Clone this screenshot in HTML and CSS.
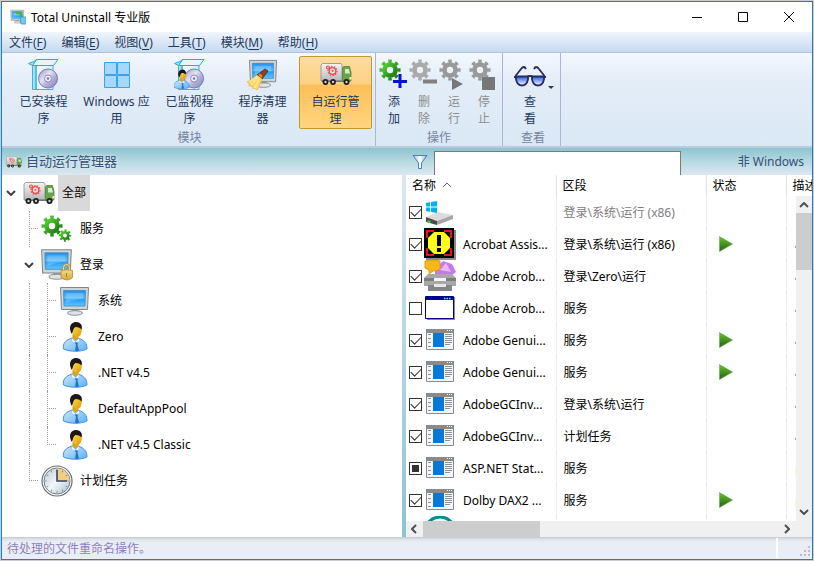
FILE: index.html
```html
<!DOCTYPE html>
<html lang="zh-CN">
<head>
<meta charset="utf-8">
<title>Total Uninstall 专业版</title>
<link rel="stylesheet" href="styles.css">
</head>
<body>
<svg class="sprite" aria-hidden="true">
  <defs>
    <linearGradient id="g-green" x1="0" y1="0" x2="1" y2="1"><stop offset="0" stop-color="#55cf33"/><stop offset="1" stop-color="#1c7a12"/></linearGradient>
    <linearGradient id="g-play" x1="0" y1="0" x2="0" y2="1"><stop offset="0" stop-color="#62c92c"/><stop offset="1" stop-color="#2a5f1c"/></linearGradient>
    <linearGradient id="g-screen" x1="0" y1="0" x2="0" y2="1"><stop offset="0" stop-color="#1c90f0"/><stop offset=".5" stop-color="#63c0ff"/><stop offset=".55" stop-color="#1e9cff"/><stop offset="1" stop-color="#62c4ff"/></linearGradient>
    <linearGradient id="g-metal" x1="0" y1="0" x2="0" y2="1"><stop offset="0" stop-color="#f4f4f4"/><stop offset="1" stop-color="#b4b8bb"/></linearGradient>
    <linearGradient id="g-shirt" x1="0" y1="0" x2="1" y2="1"><stop offset="0" stop-color="#cfe8ff"/><stop offset="1" stop-color="#5eaef5"/></linearGradient>
    <linearGradient id="g-face" x1="0" y1="0" x2="1" y2="1"><stop offset="0" stop-color="#ffe24a"/><stop offset="1" stop-color="#d89a10"/></linearGradient>
    <linearGradient id="g-gold" x1="0" y1="0" x2="0" y2="1"><stop offset="0" stop-color="#f8dc86"/><stop offset="1" stop-color="#d3a53a"/></linearGradient>
    <linearGradient id="g-disc" x1="0" y1="0" x2="1" y2="1"><stop offset="0" stop-color="#8f92c4"/><stop offset=".4" stop-color="#e6e2f6"/><stop offset=".6" stop-color="#b5b2dc"/><stop offset="1" stop-color="#8082b8"/></linearGradient>
    <linearGradient id="g-box" x1="0" y1="0" x2="1" y2="0"><stop offset="0" stop-color="#b8ecfb"/><stop offset=".2" stop-color="#6fd2f4"/><stop offset=".24" stop-color="#f2fbff"/><stop offset="1" stop-color="#d3effb"/></linearGradient>
    <linearGradient id="g-lens" x1="0" y1="0" x2="0" y2="1"><stop offset="0" stop-color="#1d5cf0"/><stop offset="1" stop-color="#fff"/></linearGradient>
    <linearGradient id="g-clock" x1="0" y1="0" x2="1" y2="1"><stop offset="0" stop-color="#b9cad6"/><stop offset=".5" stop-color="#f2f7fa"/><stop offset="1" stop-color="#a9bfcd"/></linearGradient>
    <linearGradient id="g-funnel" x1="0" y1="0" x2="1" y2="0"><stop offset="0" stop-color="#8fc0e6"/><stop offset=".5" stop-color="#fff"/><stop offset="1" stop-color="#7fb2dc"/></linearGradient>
  </defs>
  <symbol id="gear" viewBox="0 0 24 24">
    <circle cx="12" cy="12" r="6" fill="none" stroke-width="5"/>
    <circle cx="12" cy="12" r="9.5" fill="none" stroke-width="4" pathLength="16" stroke-dasharray="1 1" stroke-dashoffset=".5"/>
  </symbol>
  <symbol id="truck" viewBox="0 0 32 32">
    <path d="M1 7 2.500 5.500H21l1 1.500v16H1z" fill="url(#g-metal)" stroke="#8a8a8a" stroke-width=".8"/>
    <path d="M22.500 9.500 24 8.500h5.500l1.500 6V23h-8.500z" fill="#6ba34c" stroke="#4b8531" stroke-width=".8"/>
    <path d="M25 11h3.800l1.200 4.500h-5z" fill="#d5ecc9"/>
    <path d="M2 22.500h28V24H2z" fill="#777"/>
    <path d="M29.500 19h2v2.500h-2z" fill="#f6efc0"/>
    <g fill="#1d1d1d"><circle cx="5.500" cy="24" r="2.900"/><circle cx="13" cy="24" r="2.900"/><circle cx="26.500" cy="24" r="3"/></g>
    <g fill="#ccc"><circle cx="5.500" cy="24" r="1.200"/><circle cx="13" cy="24" r="1.200"/><circle cx="26.500" cy="24" r="1.200"/></g>
    <circle cx="12.500" cy="13" r="3.300" fill="#fbdcdc" stroke="#ee4a4a" stroke-width="1.300"/>
    <circle cx="12.500" cy="13" r="4.500" fill="none" stroke="#ee4a4a" stroke-width="1.200" pathLength="20" stroke-dasharray="1 1"/>
    <circle cx="12.500" cy="13" r="1" fill="#e55"/>
    <circle cx="8" cy="9.500" r="1.500" fill="none" stroke="#ee4a4a" stroke-width="1.200"/>
  </symbol>
  <symbol id="monitor" viewBox="0 0 32 32">
    <path d="M13 24h6l1 3h-8z" fill="#9ea5aa"/>
    <ellipse cx="16" cy="28" rx="7.500" ry="2.300" fill="#dfe3e5" stroke="#8d9498"/>
    <path d="M1.500 2.500h28l-1 22H2.500z" fill="#cfd4d7" stroke="#7f878c" stroke-linejoin="round"/>
    <path d="M4.500 5.500h22l-.500 15.500H5z" fill="url(#g-screen)" stroke="#4a86b8" stroke-width=".8"/>
    <path d="M7 8h17v6c-6 0-10 1-17 4z" fill="#fff" opacity=".2"/>
  </symbol>
  <symbol id="login" viewBox="0 0 32 32">
    <use href="#monitor" x="-1" y="-2" width="34" height="34"/>
    <path d="M22.500 22v-3.500a3 3 0 0 1 6 0V22" fill="none" stroke="#b99337" stroke-width="2.500"/>
    <path d="M22.500 22v-3.500a3 3 0 0 1 6 0V22" fill="none" stroke="#f2dc9a"/>
    <path d="M20 21.500q5.500-1.500 11.500 0v7q-5.500 5-11.500 0z" fill="url(#g-gold)" stroke="#b58b2c" stroke-width=".8"/>
    <path d="M25.500 24v4" stroke="#a98432" stroke-width="1"/>
  </symbol>
  <symbol id="person" viewBox="0 0 32 32">
    <path d="M4.500 28c-1-6 2.500-9 8.500-11h6c6 2 9 5 9 11-6 3-17 3-23.500 0z" fill="url(#g-shirt)" stroke="#3f93e0"/>
    <path d="M13.500 13h6v4l-3 3-3-3z" fill="#dca311"/>
    <path d="m13 17 3.500 3.500L20 17l1 3-3 2-1.500-1-1.500 1-3-2z" fill="#e9f5ff" stroke="#60aeea" stroke-width=".5"/>
    <path d="m17 21 2 1-.5 2 1.500 5.500-2 1-2-1 1-5.500-1-2z" fill="#1c78cc"/>
    <path d="M12.500 6c1-3 9-3.500 10 1 1 5-1.500 9-4.500 9s-5.500-5-5.500-10z" fill="url(#g-face)"/>
    <path d="M13 13C10 9 10 2 16 1c5-.5 8 3 6.500 7.500C21 7 20 6 16.500 6c-2 1-2.500 3.500-3.500 7z" fill="#1d1714"/>
  </symbol>
  <symbol id="services" viewBox="0 0 32 32">
    <use href="#gear" width="22" height="22" x="0" y="2" stroke="url(#g-green)"/>
    <use href="#gear" width="13" height="13" x="17.500" y="16" stroke="url(#g-green)"/>
  </symbol>
  <symbol id="clock" viewBox="0 0 32 32">
    <circle cx="16" cy="16" r="15" fill="#fff" stroke="#686d70" stroke-width="1.200"/>
    <circle cx="16" cy="16" r="13" fill="url(#g-clock)" stroke="#777e83"/>
    <path d="M16 16V3.500A12.500 12.500 0 0 1 28.500 16z" fill="#f0ce82"/>
    <circle cx="16" cy="16" r="11" fill="none" stroke="#5d7485" stroke-width="2" pathLength="60" stroke-dasharray=".6 4.400" stroke-dashoffset=".3"/>
    <path d="M16 5v11h10" fill="none" stroke="#33485a" stroke-width="1.600"/>
  </symbol>
  <symbol id="package" viewBox="0 0 32 32">
    <path d="M4.500 7.500h20.500v24H4.500z" fill="url(#g-box)" stroke="#38b4e4"/>
    <path d="M8 7.500v24" stroke="#2fa8dc"/>
    <path d="M4.500 7.500 8.500 1.500H30L25.500 7.500z" fill="#e2f7ff" stroke="#2fa8dc"/>
    <path d="M4.500 7.500 .5 5.500 6 3.500 8.500 1.500z" fill="#9fe2f7" stroke="#2fa8dc"/>
    <circle cx="20" cy="20.500" r="9.500" fill="url(#g-disc)" stroke="#7a7bae"/>
    <circle cx="20" cy="20.500" r="3.500" fill="#f0eefa" stroke="#8d8dbd"/>
    <circle cx="20" cy="20.500" r="1.300" fill="#7b7bae"/>
  </symbol>
  <symbol id="watched" viewBox="0 0 32 32">
    <use href="#package" width="32" height="32"/>
    <use href="#person" x="-3" y="11" width="21" height="21"/>
  </symbol>
  <symbol id="winapps" viewBox="0 0 32 32">
    <g fill="#a5d8fa" stroke="#3ba1ea"><path d="M3.500 4.500h12v12h-12zM16.500 4.500h12v12h-12zM3.500 17.500h12v12h-12zM16.500 17.500h12v12h-12z"/></g>
  </symbol>
  <symbol id="cleaner" viewBox="0 0 32 32">
    <use href="#monitor" x="1" y="0" width="31" height="31"/>
    <path d="m10 17 8-6 3 2-6 8z" fill="#8b431a" stroke="#4b240f" stroke-width=".8"/>
    <path d="m12 16 3 3" stroke="#f08632" stroke-width="2"/>
    <path d="m10 17 5 4c-1 4-3 8-5 11l-2-2-2 1-1-3-3 0 0-3-2-1c4-2 7-4 10-7z" fill="#ffd868" stroke="#e5a540" stroke-width=".6"/>
    <path d="m11 19-7 8m8-6-4 9m2-12-8 6" stroke="#fff1b0"/>
  </symbol>
  <symbol id="glasses" viewBox="0 0 32 32">
    <path d="m1.500 18 5.500-7q3-4 5 0M30.500 18l-5.500-7q-3-4-5 0" fill="none" stroke="#2a2a58" stroke-width="1.800"/>
    <path d="M2 18.500h12v3q-1.500 6-6 6t-6-6zM18 18.500h12v3q-1.500 6-6 6t-6-6z" fill="url(#g-lens)" stroke="#2a2a58" stroke-width="1.800"/>
    <path d="M0 19h3m10 0q3-2 6 0m10 0h3" fill="none" stroke="#2a2a58" stroke-width="2"/>
  </symbol>
  <symbol id="play" viewBox="0 0 14 16"><path d="M.5 .5 13.500 8 .5 15.500z" fill="url(#g-play)" stroke="#5ba53a" stroke-width=".5"/></symbol>
  <symbol id="chevron" viewBox="0 0 10 6"><path d="m1 1 4 4 4-4" fill="none" stroke="currentColor" stroke-width="2"/></symbol>
  <symbol id="drive" viewBox="0 0 32 32">
    <path d="m2 21 12-5 15 3-16 6z" fill="#dcdcdc"/><path d="m2 21 11 4v4L2 26z" fill="#4b4b4b"/><path d="m13 25 16-6v4l-16 6z" fill="#a5a5a5"/>
    <path d="m3.500 25 3 1" stroke="#3be34a" stroke-width="1.500"/>
    <path d="m2 7 4-1v4.500H2zM7 6l6-1v5.500H7zM2 11.500h4V16l-4-1zM7 11.500h6V17l-6-1z" fill="#00b2ef"/>
  </symbol>
  <symbol id="alert" viewBox="0 0 32 32">
    <path d="M2 2h30v30H2z" fill="#8b8b8b"/><path d="M0 0h30v30H0z"/>
    <path d="M2 10V2h8v2H4v6zM20 2h8v8h-2V4h-6zM2 20v8h8v-2H4v-6zM28 20v8h-8v-2h6v-6z" fill="#e5141c"/>
    <path d="M10 4h10l6 6v10l-6 6H10l-6-6V10z" fill="#ff0"/>
    <path d="M5 11h20M5 15h20M5 19h20M8 23h14M8 7h14" stroke="#fff" stroke-dasharray="1 2"/>
    <path d="M13 7h4v11h-4zM13 20h4v4h-4z"/>
  </symbol>
  <symbol id="scanner" viewBox="0 0 32 32">
    <path d="m11 9 8-8 9 3 4 8-4 3H11z" fill="#c67ae8"/><path d="m16 10 6-7 5 9z" fill="#e9b7fa"/>
    <path d="M1 1q8-2 15 0v8q-3 2-7 2l-4 3v-4l-4-2z" fill="#f6b719" stroke="#df9d11"/>
    <path d="M4 14h24l4 4v8H0v-8z" fill="#a8a8a8"/><path d="M0 18h32v3H0z" fill="#7d7d7d"/><path d="M10 18h12v3H10z" fill="#f4f4f4"/>
    <path d="M4 25h24v6H4z" fill="#858585"/><path d="M10 24h12v3H10z" fill="#e8e8e8"/>
  </symbol>
  <symbol id="window" viewBox="0 0 32 32">
    <path d="M3 5h28v23H3z" fill="#8a8a8a"/><path d="M1.500 4.500h28v22h-28z" fill="#fff" stroke="#000080"/><path d="M2 5h27v3H2z" fill="#0000a0"/><path d="M20 6.500h7" stroke="#5ff" stroke-width="1.500" stroke-dasharray="1.500 1"/>
  </symbol>
  <symbol id="app" viewBox="0 0 32 32">
    <path d="M2.500 5.500h27v20h-27z" fill="#f5f5f5" stroke="#858b90"/><path d="M2 5h28v4H2z" fill="#858b90"/><path d="M23 6.500h5" stroke="#fff" stroke-dasharray="1 1"/>
    <path d="M9 9h11v14H9z" fill="#0878d7"/><path d="M4 10.500h3m-3 4h3m-3 4h3m-3 4h3M21 10.500h7m-7 2h7m-7 2h7m-7 2h7m-7 2h7m-7 2h5" stroke="#8c9297"/>
  </symbol>
</svg>

<div class="window">
  <header class="titlebar">
    <svg class="app-icon" viewBox="0 0 16 16" aria-hidden="true"><use href="#monitor" width="15" height="15"/><path d="M6 4q5-1 6 4" fill="none" stroke="#55b431" stroke-width="2.500"/><path d="M10 8h6v7h-5z" fill="#7ac5f3" stroke="#3b93cf" stroke-width=".8"/></svg>
    <h1>Total Uninstall 专业版</h1>
    <div class="window-controls">
      <button type="button" aria-label="最小化"><svg viewBox="0 0 10 10"><path d="M0 5.500h10"/></svg></button>
      <button type="button" aria-label="最大化"><svg viewBox="0 0 10 10"><path d="M.5 .5h9v9h-9z"/></svg></button>
      <button type="button" aria-label="关闭"><svg viewBox="0 0 10 10"><path d="m0 0 10 10M10 0 0 10"/></svg></button>
    </div>
  </header>

  <nav class="menubar">
    <button type="button">文件(<u>F</u>)</button>
    <button type="button">编辑(<u>E</u>)</button>
    <button type="button">视图(<u>V</u>)</button>
    <button type="button">工具(<u>T</u>)</button>
    <button type="button">模块(<u>M</u>)</button>
    <button type="button">帮助(<u>H</u>)</button>
  </nav>

  <div class="ribbon">
    <section class="group group-modules">
      <div class="buttons">
        <button type="button" class="tool"><svg><use href="#package"/></svg><span>已安装程<br>序</span></button>
        <button type="button" class="tool"><svg><use href="#winapps"/></svg><span>Windows 应<br>用</span></button>
        <button type="button" class="tool"><svg><use href="#watched"/></svg><span>已监视程<br>序</span></button>
        <button type="button" class="tool"><svg><use href="#cleaner"/></svg><span>程序清理<br>器</span></button>
        <button type="button" class="tool active"><svg><use href="#truck"/></svg><span>自运行管<br>理</span></button>
      </div>
      <h2>模块</h2>
    </section>
    <section class="group group-actions">
      <div class="buttons">
        <button type="button" class="tool small"><svg viewBox="0 0 32 32"><use href="#gear" x="1" y="1" width="22" height="22" stroke="url(#g-green)"/><path d="M15 23.500h14M22 16v14" stroke="#0a10dc" stroke-width="3"/></svg><span>添<br>加</span></button>
        <button type="button" class="tool small" disabled><svg viewBox="0 0 32 32"><use href="#gear" x="1" y="1" width="22" height="22" stroke="#aaa"/><path d="M15 23.500h14" stroke="#808080" stroke-width="4"/></svg><span>删<br>除</span></button>
        <button type="button" class="tool small" disabled><svg viewBox="0 0 32 32"><use href="#gear" x="1" y="1" width="22" height="22" stroke="#999"/><path d="m14 20 11 6-11 6z" fill="#777"/></svg><span>运<br>行</span></button>
        <button type="button" class="tool small" disabled><svg viewBox="0 0 32 32"><use href="#gear" x="1" y="1" width="22" height="22" stroke="#999"/><path d="M14 19h13v13H14z" fill="#777"/></svg><span>停<br>止</span></button>
      </div>
      <h2>操作</h2>
    </section>
    <section class="group group-view">
      <div class="buttons">
        <button type="button" class="tool view"><svg><use href="#glasses"/></svg><span>查<br>看</span></button>
        <span class="caret"></span>
      </div>
      <h2>查看</h2>
    </section>
  </div>

  <div class="panel-header">
    <div class="panel-title"><svg aria-hidden="true"><use href="#truck"/></svg><h2>自动运行管理器</h2></div>
    <div class="filter">
      <svg viewBox="0 0 16 16" aria-hidden="true"><path d="M1 1.500h14L9.500 9v5.500h-3V9z" fill="url(#g-funnel)" stroke="#4b80b0"/></svg>
      <input type="text" aria-label="筛选">
      <a href="#">非 Windows</a>
    </div>
  </div>

  <main class="content">
    <ul class="tree">
      <li><i class="cell"><svg class="toggle"><use href="#chevron"/></svg></i><svg class="icon"><use href="#truck"/></svg><span class="label selected">全部</span></li>
      <li><i class="cell"></i><i class="cell line tee"></i><svg class="icon"><use href="#services"/></svg><span class="label">服务</span></li>
      <li><i class="cell"></i><i class="cell"><svg class="toggle"><use href="#chevron"/></svg></i><svg class="icon"><use href="#login"/></svg><span class="label">登录</span></li>
      <li><i class="cell"></i><i class="cell line"></i><i class="cell line tee"></i><svg class="icon"><use href="#monitor"/></svg><span class="label">系统</span></li>
      <li><i class="cell"></i><i class="cell line"></i><i class="cell line tee"></i><svg class="icon"><use href="#person"/></svg><span class="label">Zero</span></li>
      <li><i class="cell"></i><i class="cell line"></i><i class="cell line tee"></i><svg class="icon"><use href="#person"/></svg><span class="label">.NET v4.5</span></li>
      <li><i class="cell"></i><i class="cell line"></i><i class="cell line tee"></i><svg class="icon"><use href="#person"/></svg><span class="label">DefaultAppPool</span></li>
      <li><i class="cell"></i><i class="cell line"></i><i class="cell line tee last"></i><svg class="icon"><use href="#person"/></svg><span class="label">.NET v4.5 Classic</span></li>
      <li><i class="cell"></i><i class="cell line tee last"></i><svg class="icon"><use href="#clock"/></svg><span class="label">计划任务</span></li>
    </ul>
    <div class="splitter"></div>
    <div class="list">
      <div class="table-view">
        <table>
          <colgroup><col class="col-name"><col class="col-section"><col class="col-status"><col></colgroup>
          <thead>
            <tr><th>名称 <svg class="sort" viewBox="0 0 10 6"><path d="m1 5 4-4 4 4"/></svg></th><th>区段</th><th>状态</th><th>描述</th></tr>
          </thead>
          <tbody>
            <tr class="muted"><td><label><input type="checkbox" checked aria-label="登录项"><svg class="icon"><use href="#drive"/></svg></label></td><td>登录\系统\运行 (x86)</td><td></td><td></td></tr>
            <tr><td><label><input type="checkbox" checked><svg class="icon"><use href="#alert"/></svg>Acrobat Assis...</label></td><td>登录\系统\运行 (x86)</td><td><svg class="play"><use href="#play"/></svg></td><td class="mark"></td></tr>
            <tr><td><label><input type="checkbox" checked><svg class="icon"><use href="#scanner"/></svg>Adobe Acrob...</label></td><td>登录\Zero\运行</td><td></td><td class="mark"></td></tr>
            <tr><td><label><input type="checkbox"><svg class="icon"><use href="#window"/></svg>Adobe Acrob...</label></td><td>服务</td><td></td><td class="mark"></td></tr>
            <tr><td><label><input type="checkbox" checked><svg class="icon"><use href="#app"/></svg>Adobe Genui...</label></td><td>服务</td><td><svg class="play"><use href="#play"/></svg></td><td class="mark"></td></tr>
            <tr><td><label><input type="checkbox" checked><svg class="icon"><use href="#app"/></svg>Adobe Genui...</label></td><td>服务</td><td><svg class="play"><use href="#play"/></svg></td><td class="mark"></td></tr>
            <tr><td><label><input type="checkbox" checked><svg class="icon"><use href="#app"/></svg>AdobeGCInv...</label></td><td>登录\系统\运行</td><td></td><td class="mark"></td></tr>
            <tr><td><label><input type="checkbox" checked><svg class="icon"><use href="#app"/></svg>AdobeGCInv...</label></td><td>计划任务</td><td></td><td class="mark"></td></tr>
            <tr><td><label><input type="checkbox" class="partial"><svg class="icon"><use href="#app"/></svg>ASP.NET Stat...</label></td><td>服务</td><td></td><td class="mark pale"></td></tr>
            <tr><td><label><input type="checkbox" checked><svg class="icon"><use href="#app"/></svg>Dolby DAX2 ...</label></td><td>服务</td><td><svg class="play"><use href="#play"/></svg></td><td class="mark pale"></td></tr>
            <tr><td><svg class="icon next" viewBox="0 0 32 32"><circle cx="15" cy="16" r="15" fill="none" stroke="#078a90" stroke-width="3"/></svg></td><td></td><td></td><td></td></tr>
          </tbody>
        </table>
      </div>
      <div class="scrollbar vertical" aria-hidden="true"><svg class="up"><use href="#chevron"/></svg><div class="thumb"></div><svg class="down"><use href="#chevron"/></svg></div>
      <div class="scrollbar horizontal" aria-hidden="true"><svg class="left"><use href="#chevron"/></svg><div class="thumb"></div><svg class="right"><use href="#chevron"/></svg></div>
    </div>
  </main>

  <footer class="statusbar">
    <span>待处理的文件重命名操作。</span>
    <div class="grip"><svg viewBox="0 0 12 12" aria-hidden="true"><path d="M8 0h2v2H8zM4 4h2v2H4zM8 4h2v2H8zM0 8h2v2H0zM4 8h2v2H4zM8 8h2v2H8z" fill="#b9bfc8"/></svg></div>
  </footer>
</div>
</body>
</html>
```
FILE: styles.css
```css
* { box-sizing: border-box; }

body {
  margin: 0;
  padding: 1px;
  height: 100vh;
  background: #c9cdd1;
  font: 12px/17px "Noto Sans", "Noto Sans CJK SC", sans-serif;
  color: #000;
}

h1, h2 { margin: 0; font-size: 12px; font-weight: 400; }
button { border: 0; padding: 0; background: none; font: inherit; color: inherit; }
.sprite { position: absolute; width: 0; height: 0; }
svg { display: block; flex: none; }

.window {
  display: flex;
  flex-direction: column;
  height: 100%;
  border: 1px solid #1b7fd0;
  background: #fff;
}

/* title bar */
.titlebar { display: flex; align-items: center; flex: none; height: 30px; padding-left: 8px; }
.app-icon { width: 16px; height: 16px; margin-right: 5px; }
.window-controls { display: flex; margin-left: auto; }
.window-controls button { display: grid; place-items: center; width: 46px; height: 28px; }
.window-controls svg { width: 10px; height: 10px; fill: none; stroke: #000; overflow: visible; }

/* menu */
.menubar {
  display: flex;
  flex: none;
  gap: 15px;
  height: 21px;
  padding: 0 7px;
  border-bottom: 1px solid #b4c3d8;
  background: linear-gradient(#f0f5fc, #c5daf0);
  color: #1e395b;
}
.menubar u { text-underline-offset: 2px; }

/* ribbon */
.ribbon {
  display: flex;
  flex: none;
  border-bottom: 2px solid #b9cbe0;
  background: linear-gradient(#f4f8fe, #e3edf8 30%, #dae8f5);
  color: #1e395b;
}
.group { padding: 3px 3px 0; border-right: 1px solid #aab6d2; }
.group-modules { padding-left: 5px; }
.group-view { padding-left: 9px; padding-right: 6px; }
.group h2 { text-align: center; color: #76849c; }
.buttons { display: flex; }
.tool {
  display: flex;
  flex-direction: column;
  align-items: center;
  gap: 3px;
  width: 73px;
  height: 73px;
  padding-top: 1px;
  border: 1px solid transparent;
  border-radius: 2px;
  white-space: nowrap;
}
.tool svg { width: 32px; height: 32px; }
.tool.active {
  border-color: #c39a2e;
  background: linear-gradient(#fddca0, #fdd084 38%, #fdbf58 40%, #ffd67f);
}
.tool.small { width: 30px; }
.tool:disabled { color: #8d8d8d; }
.tool.view { width: 36px; }
.caret { align-self: flex-start; margin-top: 30px; border: 3px solid transparent; border-top-color: #1e395b; border-bottom: 0; }

/* panel header */
.panel-header {
  display: flex;
  flex: none;
  height: 27px;
  background: linear-gradient(#8dc3cf, #b7d9e1 50%, #dce8f3);
  color: #365079;
}
.panel-title { display: flex; flex: 1; align-items: center; gap: 4px; padding-left: 4px; text-shadow: 0 0 4px #fff; }
.panel-title svg { width: 16px; height: 16px; }
.panel-title h2 { font-size: 13px; }
.filter { display: flex; flex: 1; align-items: center; padding-left: 5px; }
.filter svg { width: 16px; height: 16px; margin-right: 6px; }
.filter input { align-self: flex-end; flex: 1; max-width: 247px; height: 24px; border: 1px solid #7a7a7a; border-bottom: 0; background: #fff; font: inherit; }
.filter a { margin-left: auto; padding-right: 8px; padding-left: 40px; color: inherit; text-decoration: none; white-space: nowrap; }

/* content */
.content { display: grid; flex: 1; grid-template-columns: 400fr 4px 406fr; grid-template-rows: minmax(0, 1fr); min-height: 0; }

.tree { margin: 0; padding: 0; list-style: none; overflow: hidden; }
.tree li { display: flex; align-items: center; height: 36px; }
.cell { position: relative; width: 18px; height: 36px; }
.toggle { width: 10px; height: 6px; margin: 15px 4px; color: #404040; }
.line::before { content: ""; display: block; height: 100%; margin-left: 9px; border-left: 1px dotted #9a9a9a; }
.line.last::before { height: 18px; }
.tee::after { content: ""; position: absolute; top: 17px; left: 9px; width: 9px; border-top: 1px dotted #9a9a9a; }
.icon { width: 32px; height: 32px; }
.tree .icon { margin: 0 3px; }
.label { padding: 0 4px; line-height: 36px; }
.label.selected { background: #d9d9d9; }

.splitter { background: linear-gradient(#dbe8f3, #8dc3cf); }

.list {
  display: grid;
  grid-template: 21px minmax(0, 1fr) 16px / minmax(0, 1fr) 16px;
  min-width: 0;
}
.table-view { grid-area: 1 / 1 / 3 / 3; overflow: hidden; }
table { width: 100%; table-layout: fixed; border-collapse: collapse; }
.col-name, .col-section { width: 150px; }
.col-status { width: 80px; }
th, td { padding: 0 0 0 7px; border-right: 1px dotted #e2e2e2; font-weight: 400; text-align: left; white-space: nowrap; overflow: hidden; }
th { height: 21px; padding-left: 6px; border-right-style: solid; }
th:last-child, td:last-child { border-right: 0; }
td { height: 32px; }
td:first-child { padding-left: 3px; }
.sort { display: inline-block; width: 10px; height: 6px; margin: 0 3px 2px; fill: none; stroke: #666; }
label { display: flex; align-items: center; }
label .icon { margin: 0 7px 0 2px; }
.muted { color: #7d7d7d; }
.play { width: 14px; height: 16px; margin-left: 5px; }
.next { margin-left: 16px; }
.mark::before { content: ""; display: block; width: 1px; height: 2px; margin-top: 6px; margin-left: 1px; background: #e8963c; }
.mark.pale::before { height: 10px; background: #fff7c4; }

input[type="checkbox"] {
  appearance: none;
  display: grid;
  place-items: center;
  flex: none;
  width: 13px;
  height: 13px;
  margin: 0;
  border: 1px solid #333;
  background: #fff;
}
input[type="checkbox"]:checked::before { content: ""; width: 9px; height: 5px; margin-bottom: 3px; border: solid #333; border-width: 0 0 1px 1px; transform: rotate(-45deg); }
input.partial::before { content: ""; width: 7px; height: 7px; background: #333; }

.scrollbar { display: flex; align-items: center; background: #f0f0f0; color: #505050; }
.scrollbar svg { width: 10px; height: 6px; }
.scrollbar .thumb { background: #cdcdcd; }
.vertical { grid-area: 2 / 2; flex-direction: column; padding: 6px 0; }
.vertical .thumb { width: 100%; height: 57px; margin-top: 5px; }
.up { transform: rotate(180deg); }
.down { margin-top: auto; }
.horizontal { grid-area: 3 / 1 / 4 / 3; padding: 0 20px 0 3px; }
.horizontal .thumb { width: 117px; height: 100%; margin-left: 4px; }
.left { transform: rotate(90deg); }
.right { margin-left: auto; transform: rotate(-90deg); }

/* status bar */
.statusbar {
  display: flex;
  align-items: center;
  flex: none;
  height: 22px;
  padding-left: 5px;
  background: linear-gradient(#bfc7d2, #dce1e8 2px, #eaeef4 5px);
  color: #9080bd;
}
.grip { display: flex; align-items: flex-end; justify-content: flex-end; width: 36px; height: 20px; margin-left: auto; border-left: 2px solid #fff; }
.grip svg { width: 12px; height: 12px; }
```
